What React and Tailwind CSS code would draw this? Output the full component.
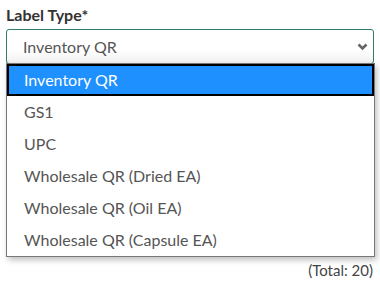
const options = [
  "Inventory QR",
  "GS1",
  "UPC",
  "Wholesale QR (Dried EA)",
  "Wholesale QR (Oil EA)",
  "Wholesale QR (Capsule EA)",
];

export default function App() {
  return (
    <div className="w-[380px] h-[285px] bg-white px-[6px] pt-[4px] font-['Lato',sans-serif] relative">
      <div className="text-[16px] font-bold text-[#333] leading-[21px]">Label Type*</div>
      <div className="relative mt-[4px]">
        <div className="h-[35px] border border-[#2e7d6e] rounded-[3px] bg-gradient-to-b from-white from-60% to-[#f1f1f1] flex items-center justify-between pl-[16px] pr-[5px]">
          <span className="text-[16px] text-[#555]">Inventory QR</span>
          <svg width="11" height="8" viewBox="0 0 11 8" className="mt-[1px]">
            <polyline points="1.5,1.5 5.5,5.5 9.5,1.5" fill="none" stroke="#666" strokeWidth="2.6" />
          </svg>
        </div>
        <div className="absolute left-0 top-[34px] w-[369px] border border-[#777] bg-white shadow-[2px_3px_6px_rgba(0,0,0,0.25)] z-10">
          {options.map((o, i) => (
            <div
              key={o}
              className={
                i === 0
                  ? "h-[32px] border-2 border-black bg-[#1e90ff] text-white flex items-center pl-[15px] text-[16px]"
                  : "h-[32px] flex items-center pl-[17px] text-[16px] text-[#555]"
              }
            >
              {o}
            </div>
          ))}
        </div>
      </div>
      <div className="absolute right-[7px] top-[259px] text-[15px] text-[#444] leading-[22px]">(Total: 20)</div>
    </div>
  );
}
